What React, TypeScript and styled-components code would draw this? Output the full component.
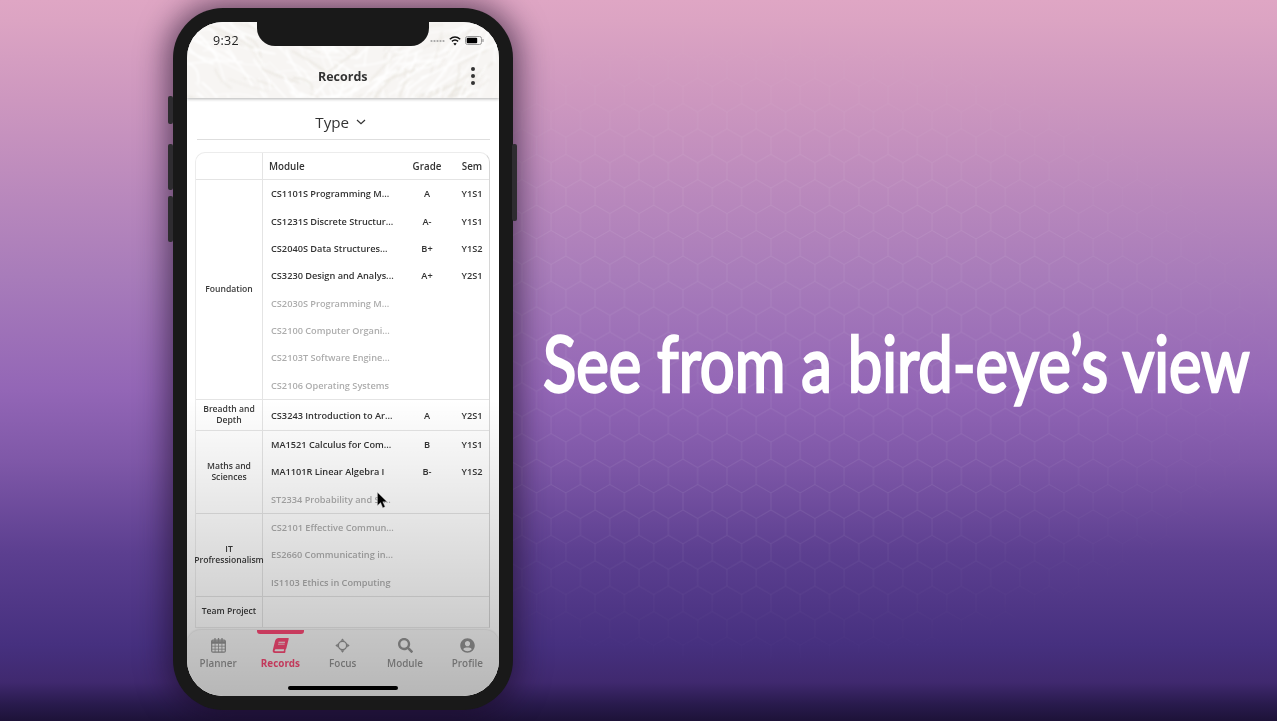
import React from 'react';
import styled, { createGlobalStyle } from 'styled-components';
import { FaBook, FaSearch, FaUserCircle } from 'react-icons/fa';

const GlobalStyle = createGlobalStyle`
  html, body { margin: 0; padding: 0; background: #1d1238; }
  * { box-sizing: border-box; }
`;

const Stage = styled.div`
  position: relative;
  width: 1277px;
  height: 721px;
  overflow: hidden;
  display: flex;
  align-items: flex-start;
  padding: 8px 0 0 173px;
  font-family: "Open Sans", "Noto Sans", sans-serif;
  background: linear-gradient(
    180deg,
    #dfa6c4 0,
    #dca4c3 20px,
    #cd97bf 100px,
    #a87cba 276px,
    #9366b6 390px,
    #7f58a8 460px,
    #5c3f90 553px,
    #46307f 645px,
    #40296f 682px,
    #281a4c 705px,
    #1d1238 721px
  );
`;

const HexLayer = styled.svg`
  position: absolute;
  left: 513px;
  top: 0;
  width: 764px;
  height: 721px;
  -webkit-mask-image: radial-gradient(ellipse 560px 340px at 240px 340px, #000 55%, transparent 100%);
`;

const Phone = styled.div`
  position: relative;
  flex: none;
  width: 340px;
  height: 702px;
  padding: 13.5px 14.5px 14.5px 14px;
  border-radius: 50px;
  background: #191919;
  box-shadow: 0 0 30px 6px rgba(25, 10, 35, 0.6);
`;

const SideButton = styled.span<{ $side: 'left' | 'right'; $top: number; $height: number }>`
  position: absolute;
  ${({ $side }) => ($side === 'left' ? 'left: -5px;' : 'right: -4px;')}
  top: ${({ $top }) => $top}px;
  width: 5px;
  height: ${({ $height }) => $height}px;
  border-radius: 2px;
  background: #2e2c30;
`;

const Notch = styled.div`
  position: absolute;
  z-index: 4;
  left: 84px;
  top: 12px;
  width: 172px;
  height: 26px;
  border-radius: 0 0 18px 18px;
  background: #191919;
`;

const Screen = styled.div`
  position: relative;
  height: 100%;
  overflow: hidden;
  border-radius: 36px;
  background: #fff;
  display: flex;
  flex-direction: column;
  filter: blur(0.3px);
`;

const Header = styled.header`
  position: relative;
  flex: none;
  height: 76px;
  overflow: hidden;
  background: #f7f5f3;
  box-shadow: 0 1px 3px rgba(0, 0, 0, 0.3);
  z-index: 1;
`;

const FurLayer = styled.svg`
  position: absolute;
  inset: 0;
  width: 100%;
  height: 100%;
  filter: blur(0.8px);
`;

const StatusBar = styled.div`
  position: relative;
  height: 38px;
  display: flex;
  align-items: center;
  justify-content: space-between;
  padding: 0 15px 0 26px;
`;

const Clock = styled.span`
  font-size: 12.5px;
  font-weight: 500;
  color: #222;
  letter-spacing: 0.3px;
`;

const StatusIcons = styled.div`
  display: flex;
  align-items: center;
  gap: 4px;
`;

const TitleRow = styled.div`
  position: relative;
  height: 34px;
  display: flex;
  align-items: center;
  justify-content: center;
`;

const Title = styled.h1`
  margin: 0;
  font-size: 12.5px;
  font-weight: 700;
  color: #333;
`;

const MenuDots = styled.div`
  position: absolute;
  right: 24px;
  top: 7px;
  display: flex;
  flex-direction: column;
  gap: 3.2px;
`;

const MenuDot = styled.span`
  width: 4px;
  height: 4px;
  border-radius: 50%;
  background: #333;
`;

const FilterRow = styled.div`
  flex: none;
  height: 42px;
  margin: 0 9px 0 10px;
  padding: 8px 5px 0 0;
  border-bottom: 1.5px solid #dedede;
  display: flex;
  align-items: center;
  justify-content: center;
  gap: 7px;
  font-size: 15.2px;
  font-weight: 500;
  color: #333;
`;

const Table = styled.div`
  flex: none;
  margin: 12.5px 8.5px 0 8px;
  border: 1px solid #ececec;
  border-right-color: #d6d6d6;
  border-radius: 10px 10px 0 0;
`;

const Section = styled.div<{ $height: number }>`
  display: flex;
  height: ${({ $height }) => $height}px;
  border-top: 1px solid #e4e4e4;
  &:first-child {
    border-top: 0;
  }
`;

const CategoryCell = styled.div`
  flex: none;
  width: 67px;
  display: flex;
  align-items: center;
  justify-content: center;
  border-right: 1px solid #e4e4e4;
  text-align: center;
  font-size: 8.6px;
  font-weight: 550;
  line-height: 11.5px;
  color: #3a3a3a;
  white-space: pre-line;
`;

const Rows = styled.div`
  flex: 1;
  min-width: 0;
  display: flex;
  flex-direction: column;
  justify-content: center;
`;

const ModuleRow = styled.div`
  display: grid;
  grid-template-columns: 137.5px 53px 37px;
  align-items: center;
  height: 27.5px;
  font-size: 9.2px;
  font-weight: 550;
  color: #333;
`;

const HeaderRow = styled(ModuleRow)`
  height: 26px;
  font-size: 9.8px;
  font-weight: 650;
  color: #333;
`;

const ModuleName = styled.span<{ $pending?: boolean }>`
  padding-left: 8px;
  white-space: nowrap;
  color: ${({ $pending }) => ($pending ? '#adadad' : '#333')};
`;

const HeadName = styled.span`
  padding-left: 6px;
`;

const CenterCell = styled.span`
  text-align: center;
`;

const Dimmer = styled.div`
  position: absolute;
  z-index: 3;
  inset: 0;
  pointer-events: none;
  background: linear-gradient(180deg, transparent 56%, rgba(0, 0, 0, 0.26) 100%);
`;

const TabBar = styled.nav`
  position: absolute;
  z-index: 2;
  left: 0;
  right: 0;
  bottom: 0;
  height: 66px;
  display: flex;
  align-items: flex-start;
  border-radius: 14px 14px 0 0;
  background: #f7f7f7;
  box-shadow: 0 -1px 2px rgba(0, 0, 0, 0.1);
`;

const Tab = styled.div<{ $active?: boolean }>`
  position: relative;
  flex: 1;
  display: flex;
  flex-direction: column;
  align-items: center;
  padding-top: 8px;
  gap: 2px;
  font-size: 9.9px;
  font-weight: ${({ $active }) => ($active ? 700 : 550)};
  color: ${({ $active }) => ($active ? '#fb4a76' : '#949494')};
`;

const TabIcon = styled.span`
  height: 16px;
  display: flex;
  align-items: center;
  justify-content: center;
  font-size: 15px;
`;

const SlantedBook = styled(FaBook)`
  transform: skewX(-14deg);
`;

const TabMarker = styled.span`
  position: absolute;
  top: 0;
  left: 50%;
  width: 47px;
  height: 4px;
  margin-left: -23.5px;
  border-radius: 0 0 3px 3px;
  background: #fb4a76;
`;

const HomeIndicator = styled.span`
  position: absolute;
  bottom: 6px;
  left: 101px;
  width: 110px;
  height: 3.5px;
  border-radius: 2px;
  background: #000;
`;

const Pointer = styled.svg`
  position: absolute;
  z-index: 5;
  left: 190px;
  top: 470px;
`;

const Caption = styled.h2`
  margin: 317px 0 0 30px;
  white-space: nowrap;
  font-family: Lato, "Open Sans", sans-serif;
  font-size: 78px;
  line-height: 74px;
  font-weight: 400;
  color: #fff;
  transform: scaleX(0.79);
  transform-origin: left center;
  -webkit-text-stroke: 2.6px #fff;
  filter: blur(0.4px);
`;

// seeded so that the fur looks the same on every load
const furStrokes = (() => {
  let seed = 7;
  const next = () => {
    seed = (seed * 16807) % 2147483647;
    return seed / 2147483647;
  };
  return Array.from({ length: 190 }, (_, i) => {
    const x = next() * 330 - 10;
    const y = next() * 86 - 6;
    const angle = (x < 150 ? 0.55 : 2.4) + (next() - 0.5) * 1.3;
    const len = 22 + next() * 34;
    const bend = (next() - 0.5) * 14;
    const dx = Math.cos(angle) * len;
    const dy = Math.sin(angle) * len;
    const d = `M${x.toFixed(1)} ${y.toFixed(1)}q${(dx / 2 + bend).toFixed(1)} ${(dy / 2 - bend).toFixed(1)} ${dx.toFixed(1)} ${dy.toFixed(1)}`;
    return { d, color: i % 4 === 0 ? '#ebe8e2' : '#ffffff', width: 0.8 + next() * 1.2 };
  });
})();

const sections = [
  {
    name: 'Foundation',
    height: 220,
    rows: [
      ['CS1101S Programming M...', 'A', 'Y1S1'],
      ['CS1231S Discrete Structur...', 'A-', 'Y1S1'],
      ['CS2040S Data Structures...', 'B+', 'Y1S2'],
      ['CS3230 Design and Analys...', 'A+', 'Y2S1'],
      ['CS2030S Programming M...'],
      ['CS2100 Computer Organi...'],
      ['CS2103T Software Engine...'],
      ['CS2106 Operating Systems'],
    ],
  },
  { name: 'Breadth and\nDepth', height: 31, rows: [['CS3243 Introduction to Ar...', 'A', 'Y2S1']] },
  {
    name: 'Maths and\nSciences',
    height: 83,
    rows: [
      ['MA1521 Calculus for Com...', 'B', 'Y1S1'],
      ['MA1101R Linear Algebra I', 'B-', 'Y1S2'],
      ['ST2334 Probability and St...'],
    ],
  },
  {
    name: 'IT\nProfressionalism',
    height: 83,
    rows: [['CS2101 Effective Commun...'], ['ES2660 Communicating in...'], ['IS1103 Ethics in Computing']],
  },
  { name: 'Team Project', height: 31, rows: [] },
];

const CalendarIcon = () => (
  <svg width="15" height="15" viewBox="0 0 15 15" fill="none" stroke="currentColor">
    <rect x="0.7" y="2.2" width="13.6" height="12" rx="1.2" strokeWidth="1.2" />
    <path d="M0.7 3.2h13.6v2.2H0.7z" fill="currentColor" strokeWidth="0.6" />
    <path d="M0.7 8.2h13.6M0.7 11.2h13.6M4.1 5.4v8.8M7.5 5.4v8.8M10.9 5.4v8.8" strokeWidth="0.8" />
    <path d="M4 0.4v3M7.5 0.4v3M11 0.4v3" strokeWidth="1.3" strokeLinecap="round" />
  </svg>
);

const FocusIcon = () => (
  <svg width="15" height="15" viewBox="0 0 16 16" fill="currentColor">
    <circle cx="8" cy="8" r="4.4" fill="none" stroke="currentColor" strokeWidth="1.4" />
    <path d="M8 0.4 10.2 3H5.8zM8 15.6 5.8 13h4.4zM0.4 8 3 5.8v4.4zM15.6 8 13 10.2V5.8z" />
  </svg>
);

const tabs = [
  { label: 'Planner', icon: <CalendarIcon /> },
  { label: 'Records', icon: <SlantedBook />, active: true },
  { label: 'Focus', icon: <FocusIcon /> },
  { label: 'Module', icon: <FaSearch /> },
  { label: 'Profile', icon: <FaUserCircle /> },
];

export default function App() {
  return (
    <Stage>
      <GlobalStyle />
      <HexLayer>
        <defs>
          <pattern id="hex" x="8.85" y="1.9" width="29.3" height="50.8" patternUnits="userSpaceOnUse">
            <path
              d="M14.65 0 29.3 8.47V25.4L14.65 33.87 0 25.4V8.47ZM14.65 33.87V50.8"
              fill="none"
              stroke="rgba(255,255,255,0.08)"
              strokeWidth="1"
            />
          </pattern>
        </defs>
        <rect width="764" height="721" fill="url(#hex)" />
      </HexLayer>

      <Phone>
        <SideButton $side="left" $top={88} $height={28} />
        <SideButton $side="left" $top={136} $height={46} />
        <SideButton $side="left" $top={188} $height={46} />
        <SideButton $side="right" $top={136} $height={77} />
        <Notch />
        <Screen>
          <Header>
            <FurLayer viewBox="0 0 311 76">
              <g fill="none" strokeLinecap="round">
                {furStrokes.map((s, i) => (
                  <path key={i} d={s.d} stroke={s.color} strokeWidth={s.width} />
                ))}
              </g>
            </FurLayer>
            <StatusBar>
              <Clock>9:32</Clock>
              <StatusIcons>
                <svg width="15" height="4" viewBox="0 0 15 4" fill="#a5a5a5">
                  <circle cx="1.5" cy="2" r="1.1" />
                  <circle cx="4.5" cy="2" r="1.1" />
                  <circle cx="7.5" cy="2" r="1.1" />
                  <circle cx="10.5" cy="2" r="1.1" />
                  <circle cx="13.5" cy="2" r="1.1" />
                </svg>
                <svg width="12" height="10" viewBox="0 0 12 10" fill="none" stroke="#111" strokeWidth="1.5">
                  <path d="M0.8 3.2C4 .4 8 .4 11.2 3.2" />
                  <path d="M2.9 5.4C4.8 3.8 7.2 3.8 9.1 5.4" />
                  <path d="M6 9.6 4.3 7.5C5.3 6.8 6.7 6.8 7.7 7.5Z" fill="#111" stroke="none" />
                </svg>
                <svg width="19" height="9" viewBox="0 0 19 9">
                  <rect x="0.5" y="0.5" width="16" height="8" rx="2" fill="none" stroke="#999" />
                  <rect x="1.7" y="1.7" width="10.5" height="5.6" rx="1" fill="#000" />
                  <rect x="17.4" y="3" width="1.2" height="3" rx="0.6" fill="#999" />
                </svg>
              </StatusIcons>
            </StatusBar>
            <TitleRow>
              <Title>Records</Title>
              <MenuDots>
                <MenuDot />
                <MenuDot />
                <MenuDot />
              </MenuDots>
            </TitleRow>
          </Header>

          <FilterRow>
            Type
            <svg width="10" height="6" viewBox="0 0 10 6" fill="none" stroke="#333" strokeWidth="1.2">
              <path d="M1 1l4 3.6L9 1" />
            </svg>
          </FilterRow>

          <Table>
            <Section $height={26}>
              <CategoryCell />
              <Rows>
                <HeaderRow>
                  <HeadName>Module</HeadName>
                  <CenterCell>Grade</CenterCell>
                  <CenterCell>Sem</CenterCell>
                </HeaderRow>
              </Rows>
            </Section>
            {sections.map((section) => (
              <Section key={section.name} $height={section.height}>
                <CategoryCell>{section.name}</CategoryCell>
                <Rows>
                  {section.rows.map((row) => (
                    <ModuleRow key={row[0]}>
                      <ModuleName $pending={row.length === 1}>{row[0]}</ModuleName>
                      <CenterCell>{row[1]}</CenterCell>
                      <CenterCell>{row[2]}</CenterCell>
                    </ModuleRow>
                  ))}
                </Rows>
              </Section>
            ))}
          </Table>

          <TabBar>
            {tabs.map((tab) => (
              <Tab key={tab.label} $active={tab.active}>
                {tab.active && <TabMarker />}
                <TabIcon>{tab.icon}</TabIcon>
                {tab.label}
              </Tab>
            ))}
            <HomeIndicator />
          </TabBar>
          <Dimmer />
          <Pointer width="11" height="17" viewBox="0 0 11 17">
            <path d="M0.5 0.5V13.5L3.6 10.6 5.8 15.8 8 14.8 5.8 9.8H10Z" fill="#000" stroke="#bbb" strokeWidth="0.4" />
          </Pointer>
        </Screen>
      </Phone>

      <Caption>See from a bird-eye’s view</Caption>
    </Stage>
  );
}
